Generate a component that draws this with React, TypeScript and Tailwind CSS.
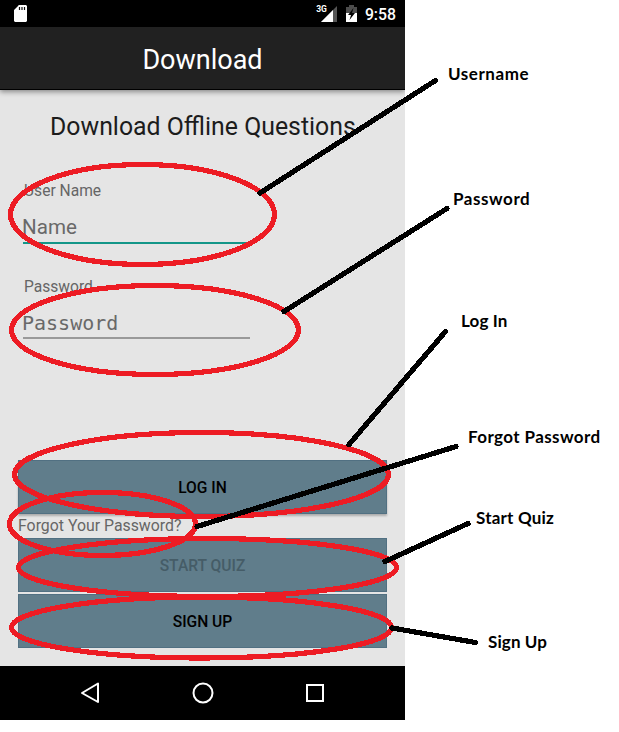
import type { ReactNode } from "react";

function StatusBar() {
  return (
    <div className="flex h-[27px] shrink-0 items-center bg-black pr-[9px] pl-[14px] text-white">
      <svg width="13" height="17" viewBox="0 0 13 17">
        <path d="M4.5 0H12L13 1V16L12 17H1L0 16V5L4.5 0.5Z" fill="#fff" />
        <path d="M5.5 2V5M8 2V5M10.5 2V5" stroke="#111" strokeWidth="1.2" />
      </svg>
      <div className="ml-auto flex items-center">
        <span className="-mt-[9px] -mr-[6px] h-[10px] text-[8.5px] leading-[10px] font-bold">3G</span>
        <svg width="16" height="16" viewBox="0 0 16 16">
          <path d="M16 0V16H0Z" fill="#555" />
          <path d="M12 4V16H0Z" fill="#fff" />
        </svg>
        <svg width="11" height="17" viewBox="0 0 11 17" className="ml-[9px]">
          <path d="M0 2H3V0H8V2H11V9H0Z" fill="#4d4d4d" />
          <path d="M0 8H11V17H0Z" fill="#fff" />
          <path d="M7.5 3L2 10H5L3.5 15L9 8H6Z" fill="#000" />
        </svg>
        <span className="mt-px ml-[8px] text-[15.8px] leading-[27px] font-medium">9:58</span>
      </div>
    </div>
  );
}

function ActionButton({ children, className = "" }: { children: ReactNode; className?: string }) {
  return (
    <button
      className={`block h-[54px] w-[369px] shrink-0 border border-[#517082] bg-[#607d8b] pt-[2px] text-center text-[15.6px] leading-[50px] font-medium ${className}`}
    >
      {children}
    </button>
  );
}

function Phone() {
  return (
    <div className="flex h-[720px] w-[405px] flex-col overflow-hidden bg-[#e5e5e5]">
      <StatusBar />
      <header className="flex h-[63px] shrink-0 items-center justify-center border-b border-black bg-[#212121] text-[27px] text-white shadow-[0_2px_5px_rgba(0,0,0,0.4)]">
        <span className="mt-[4px]">Download</span>
      </header>
      <main className="flex h-[576px] flex-col px-[18px]">
        <h1 className="mt-[21px] pl-[32px] text-[24.85px] leading-[32px] whitespace-nowrap text-[#1c1c1c]">
          Download Offline Questions
        </h1>
        <label className="mt-[38px] pl-[6px] text-[15.6px] leading-[20px] text-[#666]">User Name</label>
        <div className="mt-[9px] ml-[5px] h-[34px] w-[227px] border-b-2 border-[#139688] text-[20.6px] leading-[34px] text-[#696969]">
          <span className="-ml-px">Name</span>
        </div>
        <label className="mt-[33px] pl-[6px] text-[15.6px] leading-[20px] text-[#666]">Password</label>
        <div className="mt-[9px] ml-[5px] h-[33px] w-[227px] border-b-2 border-[#999] font-['DejaVu_Sans_Mono',monospace] text-[20px] leading-[34px] text-[#696969]">
          <span className="-ml-px">Password</span>
        </div>
        <ActionButton className="mt-[121px] text-black shadow-[0_2px_2px_rgba(0,0,0,0.25)]">LOG IN</ActionButton>
        <a className="h-[24px] text-[15.85px] leading-[24px] text-[#666]">Forgot Your Password?</a>
        <ActionButton className="text-[#455c67]">START QUIZ</ActionButton>
        <ActionButton className="mt-[2px] text-black">SIGN UP</ActionButton>
      </main>
      <nav className="flex h-[54px] shrink-0 items-center justify-center gap-[90px] bg-black">
        <svg width="22" height="22" viewBox="0 0 22 22" fill="none" stroke="#fff" strokeWidth="2" strokeLinejoin="round">
          <path d="M18 1.5V20L2 11Z" />
        </svg>
        <svg width="22" height="22" viewBox="0 0 22 22" fill="none" stroke="#fff" strokeWidth="2">
          <circle cx="11" cy="11" r="9.5" />
        </svg>
        <svg width="22" height="22" viewBox="0 0 22 22" fill="none" stroke="#fff" strokeWidth="2">
          <rect x="3" y="3" width="16" height="16" />
        </svg>
      </nav>
    </div>
  );
}

const ellipses = [
  [142.5, 214.5, 132, 50],
  [155, 330, 143.5, 44.5],
  [201.5, 474.5, 187, 42],
  [102.5, 524, 93, 31.5],
  [207.5, 567.5, 189, 29],
  [201.5, 627.5, 190, 30.5],
];

const lines = [
  [435.5, 80.5, 260, 193],
  [447, 208.5, 284, 311.5],
  [445.5, 331.5, 349, 444.5],
  [456, 446.5, 197, 526.5],
  [468, 523.5, 385, 561.5],
  [475.5, 642.5, 392, 628],
];

function Callout({ className, children }: { className: string; children: ReactNode }) {
  return (
    <span className={`absolute font-['Lato',sans-serif] text-[17px] leading-[20px] font-bold whitespace-nowrap text-black ${className}`}>
      {children}
    </span>
  );
}

export default function App() {
  return (
    <div className="relative h-[732px] w-[619px] overflow-hidden bg-white font-['Roboto',sans-serif]">
      <Phone />
      <svg className="pointer-events-none absolute inset-0" width="619" height="732" shapeRendering="crispEdges" fill="none" strokeWidth="5.2">
        {ellipses.map(([cx, cy, rx, ry]) => (
          <ellipse key={cy} cx={cx} cy={cy} rx={rx} ry={ry} stroke="#ed1c24" />
        ))}
        {lines.map(([x1, y1, x2, y2]) => (
          <line key={y1} x1={x1} y1={y1} x2={x2} y2={y2} stroke="#000" strokeLinecap="round" />
        ))}
      </svg>
      <Callout className="top-[64px] left-[448px] tracking-[0.55px]">Username</Callout>
      <Callout className="top-[189px] left-[453px] tracking-[0.55px]">Password</Callout>
      <Callout className="top-[311px] left-[461px] tracking-[0.15px]">Log In</Callout>
      <Callout className="top-[427px] left-[468px] tracking-[0.4px]">Forgot Password</Callout>
      <Callout className="top-[508px] left-[476px] tracking-[0.2px]">Start Quiz</Callout>
      <Callout className="top-[632px] left-[488px] tracking-[0.1px]">Sign Up</Callout>
    </div>
  );
}
